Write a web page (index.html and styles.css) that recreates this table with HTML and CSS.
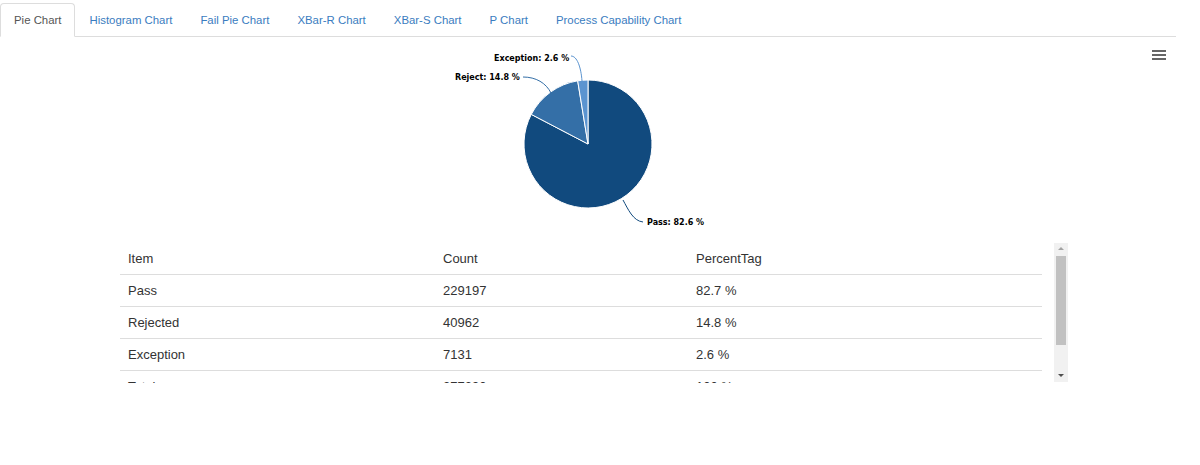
FILE: index.html
```html
<!DOCTYPE html>
<html>
<head>
<meta charset="utf-8">
<link rel="stylesheet" href="styles.css">
</head>
<body>
<ul class="tabs">
  <li class="tab active"><a>Pie Chart</a></li>
  <li class="tab"><a>Histogram Chart</a></li>
  <li class="tab"><a>Fail Pie Chart</a></li>
  <li class="tab"><a>XBar-R Chart</a></li>
  <li class="tab"><a>XBar-S Chart</a></li>
  <li class="tab"><a>P Chart</a></li>
  <li class="tab"><a>Process Capability Chart</a></li>
</ul>
<div class="chart">
  <svg class="chart-svg" width="1176" height="206" viewBox="0 0 1176 206">
    <path d="M588 107 L588 43 A64 64 0 1 1 531.26 77.39 Z" fill="#114a7e" stroke="#fff" stroke-width="1" stroke-linejoin="round"/>
    <path d="M588 107 L531.26 77.39 A64 64 0 0 1 577.7 43.83 Z" fill="#346fa7" stroke="#fff" stroke-width="1" stroke-linejoin="round"/>
    <path d="M588 107 L577.7 43.83 A64 64 0 0 1 588 43 Z" fill="#5b94d0" stroke="#fff" stroke-width="1" stroke-linejoin="round"/>
    <path d="M571 19 C577 19, 581 30, 582 44" fill="none" stroke="#5b94d0" stroke-width="1"/>
    <path d="M523 40 C536 40, 546 46, 551 56" fill="none" stroke="#346fa7" stroke-width="1"/>
    <path d="M623 163 C628 172, 633 184, 643 185" fill="none" stroke="#114a7e" stroke-width="1"/>
    <text class="label" x="494" y="24">Exception: 2.6 %</text>
    <text class="label" x="455" y="43">Reject: 14.8 %</text>
    <text class="label" x="647" y="188">Pass: 82.6 %</text>
    <g stroke="#666" stroke-width="2">
      <line x1="1152" y1="14" x2="1166" y2="14"/>
      <line x1="1152" y1="18" x2="1166" y2="18"/>
      <line x1="1152" y1="22" x2="1166" y2="22"/>
    </g>
  </svg>
</div>
<div class="grid">
  <div class="grid-body">
    <table class="data">
      <colgroup><col class="c1"><col class="c2"><col class="c3"></colgroup>
      <tr><td>Item</td><td>Count</td><td>PercentTag</td></tr>
      <tr><td>Pass</td><td>229197</td><td>82.7 %</td></tr>
      <tr><td>Rejected</td><td>40962</td><td>14.8 %</td></tr>
      <tr><td>Exception</td><td>7131</td><td>2.6 %</td></tr>
      <tr><td>Total</td><td>277290</td><td>100 %</td></tr>
    </table>
  </div>
  <div class="scrollbar">
    <div class="arrow-up"></div>
    <div class="thumb"></div>
    <div class="spacer"></div>
    <div class="arrow-down"></div>
  </div>
</div>
</body>
</html>
```

FILE: styles.css
```css
html, body {
  margin: 0;
  padding: 0;
  background: #fff;
  font-family: "Liberation Sans", Arial, sans-serif;
}

.tabs {
  list-style: none;
  margin: 3px 0 0 0;
  padding: 0;
  width: 1176px;
  display: flex;
  border-bottom: 1px solid #ddd;
}

.tab {
  margin-bottom: -1px;
}

.tab a {
  display: block;
  padding: 9px 13px 8px;
  line-height: 15px;
  font-size: 11.4px;
  color: #3a7cc0;
  border: 1px solid transparent;
  border-radius: 4px 4px 0 0;
}

.tab.active a {
  color: #555;
  background: #fff;
  border-color: #ddd;
  border-bottom-color: transparent;
}

.chart {
  width: 1176px;
  height: 206px;
}

.chart-svg {
  display: block;
}

.label {
  font-family: "DejaVu Sans", Verdana, sans-serif;
  font-size: 8px;
  font-weight: bold;
  fill: #000;
}

.grid {
  display: flex;
  align-items: flex-start;
  margin-left: 120px;
}

.grid-body {
  width: 922px;
  height: 140px;
  overflow: hidden;
}

.data {
  width: 922px;
  border-collapse: collapse;
  table-layout: fixed;
  font-size: 13px;
  color: #333;
}

.c1 { width: 315px; }
.c2 { width: 253px; }
.c3 { width: 354px; }

.data td {
  padding: 8px 8px;
  line-height: 15px;
  border-bottom: 1px solid #ddd;
  text-align: left;
}

.scrollbar {
  margin-left: 12px;
  width: 14px;
  height: 139px;
  background: #f1f1f1;
  display: flex;
  flex-direction: column;
  align-items: center;
}

.arrow-up {
  margin-top: 4px;
  width: 0;
  height: 0;
  border-left: 3px solid transparent;
  border-right: 3px solid transparent;
  border-bottom: 3px solid #a3a3a3;
}

.thumb {
  margin-top: 6px;
  width: 10px;
  height: 89px;
  background: #c1c1c1;
}

.spacer {
  flex: 1;
}

.arrow-down {
  margin-bottom: 5px;
  width: 0;
  height: 0;
  border-left: 3px solid transparent;
  border-right: 3px solid transparent;
  border-top: 3px solid #505050;
}
```
